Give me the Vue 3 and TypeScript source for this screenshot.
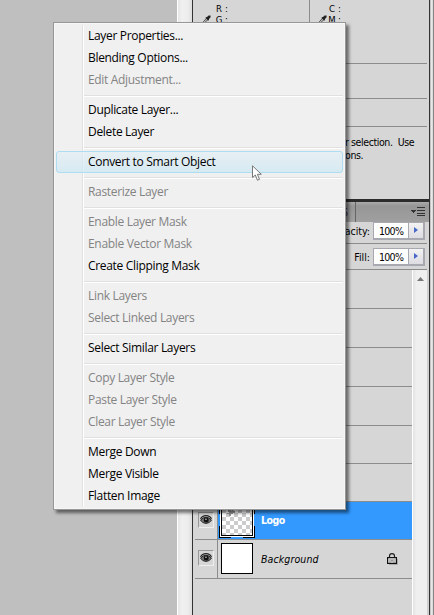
<script setup lang="ts">
interface MenuItem {
  label: string
  disabled?: boolean
  active?: boolean
}

const groups: MenuItem[][] = [
  [{ label: 'Layer Properties...' }, { label: 'Blending Options...' }, { label: 'Edit Adjustment...', disabled: true }],
  [{ label: 'Duplicate Layer...' }, { label: 'Delete Layer' }],
  [{ label: 'Convert to Smart Object', active: true }],
  [{ label: 'Rasterize Layer', disabled: true }],
  [
    { label: 'Enable Layer Mask', disabled: true },
    { label: 'Enable Vector Mask', disabled: true },
    { label: 'Create Clipping Mask' },
  ],
  [{ label: 'Link Layers', disabled: true }, { label: 'Select Linked Layers', disabled: true }],
  [{ label: 'Select Similar Layers' }],
  [
    { label: 'Copy Layer Style', disabled: true },
    { label: 'Paste Layer Style', disabled: true },
    { label: 'Clear Layer Style', disabled: true },
  ],
  [{ label: 'Merge Down' }, { label: 'Merge Visible' }, { label: 'Flatten Image' }],
]

const swatches = [
  ['R', 'G'],
  ['C', 'M'],
]
const fields = ['Opacity:', 'Fill:']
const emptyRows = [39, 39, 39, 39, 38, 38]
</script>

<template>
  <div class="screen">
    <div class="canvas"></div>
    <div class="dock-gap"></div>
    <div class="panel">
      <section class="info">
        <div class="readouts">
          <div v-for="pair in swatches" :key="pair[0]" class="readout">
            <svg class="dropper" width="9" height="9" viewBox="0 0 9 9">
              <path d="M1 8.2 1.4 6.7 4.6 3.2 6 4.6 2.5 7.8Z" fill="#bbb" stroke="#333" stroke-width=".8" />
              <path d="M3.8 2.2 5 2 6.6.4 8.5.5 8.6 2.3 7 3.9 6.9 5.3 6.1 5.5 3.5 3Z" fill="#222" />
            </svg>
            <div class="letters">
              <span v-for="c in pair" :key="c"><b>{{ c }}</b>:</span>
            </div>
          </div>
        </div>
        <div class="rule r1"></div>
        <div class="rule r2"></div>
        <div class="rule r3"></div>
        <div class="hint"><div>r selection.&nbsp; Use</div><div>ons.</div></div>
      </section>
      <div class="tabbar">
        <span class="tab">S</span>
        <svg width="15" height="10" viewBox="0 0 15 10" shape-rendering="crispEdges">
          <path d="M0 3h5v1H4v1H3v1H2V5H1V4H0zM6 0h8v1H6zM6 3h8v1H6zM6 6h8v1H6zM6 8h8v1H6z" fill="#333" />
        </svg>
      </div>
      <div v-for="f in fields" :key="f" class="field" :class="{ fill: f === 'Fill:' }">
        <span>{{ f }}</span>
        <div class="input">
          <span class="value">100%</span>
          <span class="arrow"><svg width="4" height="6" viewBox="0 0 4 6"><path d="M0 0 4 3 0 6Z" fill="#4868c8" /></svg></span>
        </div>
      </div>
      <div class="layers">
        <div class="list">
          <div v-for="(h, i) in emptyRows" :key="i" class="blank" :style="{ height: h + 'px' }"></div>
          <div class="layer selected">
            <div class="visibility"><div class="eye"><svg width="12" height="10" viewBox="0 0 12 10">
              <path d="M.5 4Q2 .7 6 .7T11.5 4" fill="none" stroke="#222" stroke-width="1.2" />
              <path d="M.5 5.3Q3 2.2 6 2.2T11.5 5.3Q9 8.4 6 8.4T.5 5.3Z" fill="#777" stroke="#222" />
              <circle cx="6.2" cy="5" r="2.5" fill="#111" /><rect x="5.3" y="3.6" width="1.3" height="1.3" fill="#ddd" />
            </svg></div></div>
            <div class="frame"><div class="thumb checker"><svg width="9" height="8" viewBox="0 0 9 8"><path d="M1 1h3v1h1V0h1v2h2v2H6v1H4v2H2V5H0V4h2V3H1z" fill="#999" /></svg></div></div>
            <span class="name">Logo</span>
          </div>
          <div class="layer base">
            <div class="visibility"><div class="eye"><svg width="12" height="10" viewBox="0 0 12 10">
              <path d="M.5 4Q2 .7 6 .7T11.5 4" fill="none" stroke="#222" stroke-width="1.2" />
              <path d="M.5 5.3Q3 2.2 6 2.2T11.5 5.3Q9 8.4 6 8.4T.5 5.3Z" fill="#777" stroke="#222" />
              <circle cx="6.2" cy="5" r="2.5" fill="#111" /><rect x="5.3" y="3.6" width="1.3" height="1.3" fill="#ddd" />
            </svg></div></div>
            <div class="thumb white"></div>
            <span class="name italic">Background</span>
            <svg class="lock" width="11" height="12" viewBox="0 0 11 12">
              <path d="M2 11.5h8.5V6" fill="none" stroke="#aaa" />
              <path d="M2.5 5V3Q2.5.6 5 .6T7.5 3V5" fill="none" stroke="#222" stroke-width="1.2" />
              <rect x=".6" y="4.6" width="8.8" height="5.8" fill="#e2e2e2" stroke="#111" stroke-width="1.2" />
              <path d="M4.5 6.5h1v2h-1zM2.5 6.5h1v1h-1zM6.5 6.5h1v1h-1zM2.5 8.5h1v1h-1zM6.5 8.5h1v1h-1z" fill="#444" />
            </svg>
          </div>
        </div>
        <div class="scroll"><svg width="7" height="4" viewBox="0 0 7 4"><path d="M0 4 3.5 0 7 4Z" fill="#777" /></svg></div>
      </div>
    </div>
    <div class="edge"></div>

    <div class="menu">
      <div v-for="(g, i) in groups" :key="i" class="group">
        <div v-for="m in g" :key="m.label" class="item" :class="{ disabled: m.disabled, active: m.active }">{{ m.label }}</div>
      </div>
    </div>
    <svg class="cursor" width="11" height="17" viewBox="0 0 11 17">
      <path d="M.5.8V12.6L3.3 10 5.4 15.2 7.5 14.3 5.4 9.3H9.3Z" fill="#fff" stroke="#777" />
    </svg>
  </div>
</template>

<style>
body {
  margin: 0;
  overflow: hidden;
}
</style>

<style scoped>
* {
  box-sizing: border-box;
}
.screen {
  position: relative;
  display: flex;
  width: 434px;
  height: 615px;
  overflow: hidden;
  background: #d6d6d6;
  color: #000;
  font: 10.5px/13px 'DejaVu Sans Condensed', 'DejaVu Sans', sans-serif;
}
.canvas {
  width: 177px;
  background: #bfbfbf;
}
.dock-gap {
  width: 15px;
  border-left: 1px solid #fff;
  background: linear-gradient(90deg, #e6e6e6, #f0f0f0 30%, #ededed 70%, #dedede);
}
.panel {
  width: 238px;
  border-left: 1px solid #333;
  border-right: 1px solid #333;
  display: flex;
  flex-direction: column;
}
.edge {
  width: 4px;
  background: linear-gradient(90deg, #c4c4c4 1px, #e8e8e8 1px, #e8e8e8 2px, #dcdcdc 2px, #dcdcdc 3px, #858585 3px);
}
.info {
  height: 202px;
  border-bottom: 3px solid #2b2b2b;
}
.readouts {
  display: flex;
  height: 63px;
}
.readout {
  display: flex;
  width: 117px;
  padding: 3px 0 0 9px;
  border-right: 1px solid #8c8c8c;
}
.readout:last-child {
  padding-left: 8px;
  border: 0;
}
.dropper {
  margin-top: 12px;
}
.letters {
  margin-left: 4px;
  font-size: 9.5px;
  line-height: 11px;
}
.readout:last-child .letters {
  margin-left: 1px;
}
.letters span {
  display: flex;
  gap: 2px;
}
.letters b {
  width: 8px;
  font-weight: 400;
  text-align: center;
}
.rule {
  height: 1px;
  margin-right: 2px;
  background: #8c8c8c;
}
.r2 {
  margin-top: 34px;
}
.r3 {
  margin-top: 27px;
}
.hint {
  padding: 9px 0 0 152px;
  white-space: nowrap;
  letter-spacing: -0.4px;
}
.tabbar {
  display: flex;
  justify-content: space-between;
  align-items: center;
  height: 20px;
  padding-right: 3px;
  background: linear-gradient(#aaa, #969696 20%, #a0a0a0);
}
.tab {
  width: 163px;
  padding-right: 7px;
  border-right: 1px solid #666;
  line-height: 20px;
  text-align: right;
  color: #333;
}
.field {
  display: flex;
  justify-content: flex-end;
  height: 22px;
  gap: 3px;
  margin-right: 2px;
  padding-right: 2px;
  border-bottom: 1px solid #8c8c8c;
  line-height: 18px;
}
.field.fill {
  height: 26px;
  padding-top: 4px;
}
.input {
  display: flex;
  width: 52px;
  height: 18px;
  border: 1px solid #a8a8b0;
  border-right-width: 2px;
  border-bottom-width: 2px;
  background: #fff;
}
.value {
  width: 34px;
  padding-left: 5px;
  line-height: 17px;
  letter-spacing: -0.7px;
}
.arrow {
  display: flex;
  flex: 1;
  align-items: center;
  justify-content: center;
  padding: 0 1px 1px 0;
  border-left: 1px solid #a8a8b0;
  background: linear-gradient(#f3f3f3, #dcdce2);
}
.layers {
  display: flex;
  flex: 1;
  padding-left: 2px;
}
.list {
  width: 217px;
}
.blank,
.layer {
  border-bottom: 1px solid #8c8c8c;
}
.layer {
  display: flex;
  align-items: center;
  height: 38px;
}
.selected {
  background: #3399ff;
  color: #fff;
  font-weight: 700;
}
.base {
  height: 39px;
}
.visibility {
  display: flex;
  align-items: center;
  width: 23px;
  height: 100%;
  padding: 0 0 2px 3px;
  border-right: 1px solid #8c8c8c;
  background: #d6d6d6;
}
.eye {
  display: flex;
  align-items: center;
  justify-content: center;
  width: 16px;
  height: 16px;
  padding-right: 1px;
  border: 1px solid;
  border-color: #999 #eee #eee #999;
}
.frame {
  width: 36px;
  height: 36px;
  margin: 0 0 1px 1px;
  padding: 1px;
  background:
    linear-gradient(#000, #000) 0 0 / 12px 1px no-repeat,
    linear-gradient(#000, #000) 100% 0 / 12px 1px no-repeat,
    linear-gradient(#000, #000) 0 100% / 12px 1px no-repeat,
    linear-gradient(#000, #000) 100% 100% / 12px 1px no-repeat,
    linear-gradient(#000, #000) 0 0 / 1px 12px no-repeat,
    linear-gradient(#000, #000) 100% 0 / 1px 12px no-repeat,
    linear-gradient(#000, #000) 0 100% / 1px 12px no-repeat,
    linear-gradient(#000, #000) 100% 100% / 1px 12px no-repeat;
}
.thumb {
  width: 32px;
  height: 32px;
  border: 1px solid #000;
}
.checker {
  margin: 1px;
  padding: 4px 0 0 5px;
  line-height: 0;
  box-shadow: 0 0 0 1px #fff;
  background: repeating-conic-gradient(#ccc 0 25%, #fff 0 50%) 0 0 / 8px 8px;
}
.white {
  height: 31px;
  margin: 0 2px 1px 3px;
  background: #fff;
}
.name {
  margin-left: 6px;
  letter-spacing: -0.5px;
}
.italic {
  font-style: italic;
  letter-spacing: 0.1px;
}
.lock {
  margin-left: auto;
  margin-right: 14px;
}
.scroll {
  display: flex;
  flex: 1;
  align-items: flex-start;
  justify-content: center;
  padding-top: 7px;
  border-left: 1px solid #fff;
  border-right: 2px solid #d0d0d0;
  background: linear-gradient(90deg, #e4e4e4, #efefef 25%);
}
.menu {
  position: absolute;
  left: 53px;
  top: 22px;
  width: 293px;
  height: 488px;
  padding: 2px;
  border: 1px solid #979797;
  background: linear-gradient(90deg, #e2e2e2 1px, #fff 1px) 28px 2px / 2px 482px no-repeat #f0f0f0;
  box-shadow: inset 0 0 0 1px #f6f6f6, 3px 3px 3px rgba(0, 0, 0, 0.5);
  font-family: 'Open Sans', 'Noto Sans', sans-serif;
  font-size: 12px;
  line-height: 22px;
  letter-spacing: -0.32px;
}
.group + .group::before {
  content: '';
  display: block;
  height: 0;
  margin: 0 0 2px 28px;
  border-top: 1px solid #e0e0e0;
  border-bottom: 1px solid #fff;
}
.group + .group {
  padding-top: 4px;
}
.item {
  height: 22px;
  padding-left: 32px;
  white-space: nowrap;
}
.disabled {
  color: #838383;
}
.active {
  padding-left: 31px;
  border: 1px solid #aedcf0;
  border-radius: 3px;
  line-height: 20px;
  background: linear-gradient(rgba(225, 239, 245, 0.6), rgba(205, 232, 243, 0.75));
}
.cursor {
  position: absolute;
  left: 252px;
  top: 165px;
}
</style>
